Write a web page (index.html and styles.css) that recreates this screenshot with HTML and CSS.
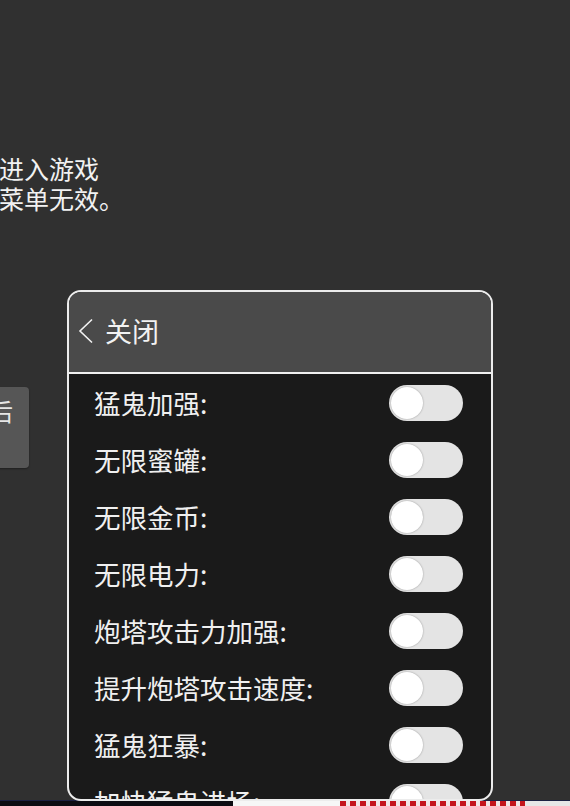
FILE: index.html
```html
<!DOCTYPE html>
<html>
<head>
    <title>菜单</title>
    <link rel="stylesheet" href="styles.css">
</head>
<body>
    <div class="page">
        <p class="notice">进入游戏<br>菜单无效。</p>
        <div class="side-btn">后</div>
    </div>

    <div class="panel">
        <div class="panel-head">
            <svg class="back-icon" width="16" height="26" viewBox="0 0 16 26">
                <path d="M14 1.5 L2 13 L14 24.5" fill="none" stroke="#f2f2f2" stroke-width="1.6"/>
            </svg>
            <span class="head-title">关闭</span>
        </div>
        <ul class="options">
            <li class="option"><span>猛鬼加强:</span><span class="switch"><span class="knob"></span></span></li>
            <li class="option"><span>无限蜜罐:</span><span class="switch"><span class="knob"></span></span></li>
            <li class="option"><span>无限金币:</span><span class="switch"><span class="knob"></span></span></li>
            <li class="option"><span>无限电力:</span><span class="switch"><span class="knob"></span></span></li>
            <li class="option"><span>炮塔攻击力加强:</span><span class="switch"><span class="knob"></span></span></li>
            <li class="option"><span>提升炮塔攻击速度:</span><span class="switch"><span class="knob"></span></span></li>
            <li class="option"><span>猛鬼狂暴:</span><span class="switch"><span class="knob"></span></span></li>
            <li class="option"><span>加快猛鬼进场:</span><span class="switch"><span class="knob"></span></span></li>
        </ul>
    </div>

    <div class="bottom-strip">
        <span class="seg seg-dark"></span>
        <span class="seg seg-white"></span>
        <span class="seg seg-red"></span>
        <span class="seg seg-light"></span>
    </div>
</body>
</html>
```

FILE: styles.css
```css
html, body { margin: 0; padding: 0; }
body { width: 570px; height: 806px; overflow: hidden; position: relative; background: #303030; color: #f0f0f0; font-family: "Noto Sans CJK SC", "Noto Sans", sans-serif; display: flex; flex-direction: column; }

.page { flex: 1; padding-top: 153px; }
.notice { margin: 0 0 0 -1px; font-size: 25px; line-height: 30px; color: #f2f2f2; }
.side-btn { width: 80px; margin: 174px 0 0 -51px; height: 81px; box-sizing: border-box; padding: 9px 16px 0 0; text-align: right; font-size: 24px; line-height: 30px; color: #e6e6e6; background: #565656; border-radius: 4px; box-shadow: 0 1px 2px rgba(0,0,0,.35); }

/* popup menu */
.panel { position: absolute; left: 67px; top: 290px; width: 426px; height: 511px; box-sizing: border-box; border: 2px solid #ececec; border-radius: 14px; overflow: hidden; background: #1a1a1a; }
.panel-head { height: 80px; background: #4a4a4a; border-bottom: 2px solid #f0f0f0; display: flex; align-items: center; padding-left: 9px; }
.back-icon { display: block; margin-top: -2px; }
.head-title { margin-left: 11px; font-size: 27px; color: #f2f2f2; margin-top: -3px; }

.options { list-style: none; margin: 0; padding: 0 28px 0 25px; }
.option { height: 57px; display: flex; align-items: center; justify-content: space-between; font-size: 26.5px; color: #f0f0f0; }

.switch { width: 74px; height: 36px; border-radius: 18px; background: #e4e4e4; position: relative; flex: none; }
.knob { position: absolute; left: 2px; top: 2px; width: 32px; height: 32px; border-radius: 50%; background: #fff; box-shadow: 0 0 2px rgba(0,0,0,.35); }

.bottom-strip { height: 5px; display: flex; border-top: 1px solid #1c2142; flex: none; }
.seg { display: block; height: 100%; }
.seg-dark { width: 233px; background: #0c0c12; }
.seg-white { width: 107px; background: #f6f6f6; }
.seg-red { width: 185px; background: repeating-linear-gradient(90deg, #c4141c 0 6px, #f0e6e6 6px 10px); }
.seg-light { flex: 1; background: #e6e6e6; }
```
